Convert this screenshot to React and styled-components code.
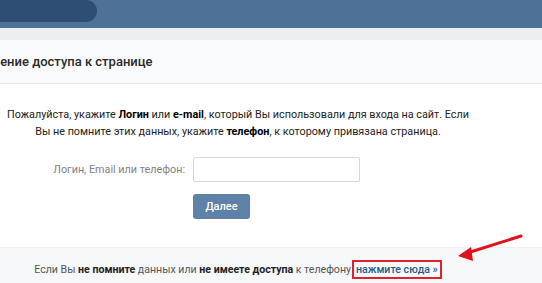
import React from "react";
import styled, { createGlobalStyle } from "styled-components";

const GlobalStyle = createGlobalStyle`
  html, body {
    margin: 0;
    padding: 0;
    background: #ffffff;
    overflow: hidden;
  }
  body {
    font-family: Roboto, "Open Sans", "Liberation Sans", sans-serif;
    width: 542px;
    height: 283px;
  }
`;

const Page = styled.div`
  position: relative;
  width: 542px;
  height: 283px;
  overflow: hidden;
`;

const TopBar = styled.header`
  height: 28px;
  background: #4e7198;
  display: flex;
  align-items: flex-start;
`;

const Search = styled.div`
  width: 97px;
  height: 22px;
  background: #2f4e73;
  border-radius: 0 11px 11px 0;
`;

const Strip = styled.div`
  height: 12px;
  background: #edeef0;
`;

const Panel = styled.section`
  width: 670px;
  margin-left: -97px;
  background: #fff;
`;

const Heading = styled.h2`
  margin: 0;
  height: 43px;
  display: flex;
  align-items: center;
  padding-left: 25px;
  background: #fafbfc;
  border-bottom: 1px solid #e7e8ec;
  font-size: 13px;
  font-weight: 500;
  color: #2a2a2a;
`;

const Body = styled.div`
  padding: 22px 0 28px;
`;

const Intro = styled.p`
  margin: 0;
  text-align: center;
  font-size: 10.8px;
  line-height: 17px;
  color: #222;

  b {
    font-weight: 700;
    color: #000;
  }
`;

const Form = styled.div`
  display: grid;
  grid-template-columns: 282px 167px;
  column-gap: 8px;
  row-gap: 12px;
  margin-top: 17px;
  align-items: center;
`;

const Label = styled.label`
  text-align: right;
  font-size: 10.8px;
  color: #828282;
`;

const Input = styled.input`
  box-sizing: border-box;
  width: 167px;
  height: 25px;
  border: 1px solid #d3d9de;
  border-radius: 2px;
  background: #fff;
  outline: none;
`;

const Button = styled.button`
  grid-column: 2;
  width: 57px;
  height: 25px;
  border: none;
  border-radius: 3px;
  background: #5e81a8;
  color: #fff;
  font-family: inherit;
  font-size: 11px;
  font-weight: 500;
  padding: 0;
`;

const Footer = styled.div`
  background: #f7f8fa;
  border-top: 1px solid #eef0f2;
  height: 42px;
  display: flex;
  align-items: center;
  justify-content: center;
  font-size: 10.6px;
  color: #555;

  b {
    font-weight: 700;
    color: #222;
  }
`;

const Link = styled.a`
  color: #2a5885;
  font-weight: 500;
  text-decoration: none;
  border: 2px solid #e0202a;
  padding: 1px 2px;
  margin-left: 1px;
`;

const Arrow = styled.svg`
  position: absolute;
  left: 440px;
  top: 228px;
`;

export default function App() {
  return (
    <Page>
      <GlobalStyle />
      <TopBar>
        <Search />
      </TopBar>
      <Strip />
      <Panel>
        <Heading>Восстановление доступа к странице</Heading>
        <Body>
          <Intro>
            Пожалуйста, укажите <b>Логин</b> или <b>e-mail</b>, который Вы
            использовали для входа на сайт. Если
            <br />
            Вы не помните этих данных, укажите <b>телефон</b>, к которому
            привязана страница.
          </Intro>
          <Form>
            <Label>Логин, Email или телефон:</Label>
            <Input />
            <Button>Далее</Button>
          </Form>
        </Body>
        <Footer>
          <span>
            Если Вы <b>не помните</b> данных или <b>не имеете доступа</b> к
            телефону
          </span>
          <Link>нажмите сюда »</Link>
        </Footer>
      </Panel>
      <Arrow width="100" height="40" viewBox="0 0 100 40">
        <line x1="81" y1="8" x2="24" y2="26" stroke="#e0111a" strokeWidth="3" strokeLinecap="round" />
        <path d="M18 28 L31 19 L33 33 Z" fill="#e0111a" />
      </Arrow>
    </Page>
  );
}
